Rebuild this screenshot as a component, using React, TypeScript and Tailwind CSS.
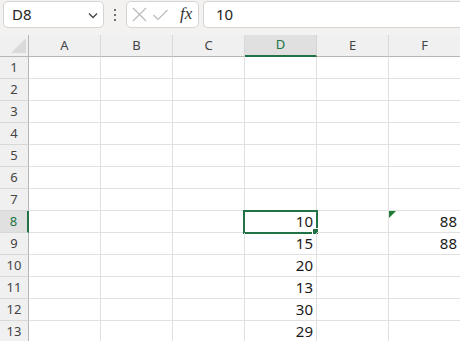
import React from "react";

const COLS = ["A", "B", "C", "D", "E", "F"];
const ROWS = Array.from({ length: 13 }, (_, i) => i + 1);
const DATA: Record<string, string> = {
  D8: "10",
  D9: "15",
  D10: "20",
  D11: "13",
  D12: "30",
  D13: "29",
  F8: "88",
  F9: "88",
};

export default function App() {
  return (
    <div
      className="w-[460px] h-[341px] overflow-hidden bg-white relative"
      style={{ fontFamily: '"Segoe UI", "Noto Sans", "Open Sans", sans-serif' }}
    >
      {/* Formula bar */}
      <div className="h-[35px] bg-[#f3f2f1] flex items-start pt-[1px] pl-[3px]">
        <div className="w-[101px] h-[27px] shrink-0 bg-white border border-[#d6d4d2] rounded-[5px] flex items-center justify-between pl-[8px] pr-[4px]">
          <span className="text-[15px] text-[#242424] leading-none">D8</span>
          <svg width="12" height="12" viewBox="0 0 12 12">
            <path d="M2 4.5 L6 8.5 L10 4.5" fill="none" stroke="#444" strokeWidth="1.3" />
          </svg>
        </div>
        <div className="w-[22px] h-[27px] shrink-0 flex flex-col items-center justify-center gap-[3px]">
          <div className="w-[2px] h-[2px] bg-[#444] rounded-full" />
          <div className="w-[2px] h-[2px] bg-[#444] rounded-full" />
          <div className="w-[2px] h-[2px] bg-[#444] rounded-full" />
        </div>
        <div className="w-[73px] h-[27px] shrink-0 bg-white border border-[#d6d4d2] rounded-[5px] flex items-center pl-[5px]">
          <svg className="shrink-0" width="15" height="15" viewBox="0 0 15 15">
            <path d="M1 1 L14 14 M14 1 L1 14" stroke="#b9b9b9" strokeWidth="1.1" fill="none" />
          </svg>
          <svg className="shrink-0 ml-[6px]" width="15" height="15" viewBox="0 0 15 15">
            <path d="M0.5 8 L5 12.5 L14.5 3" stroke="#b9b9b9" strokeWidth="1.1" fill="none" />
          </svg>
          <span
            className="shrink-0 text-[17px] italic text-[#333] leading-none ml-[12px] mb-[2px]"
            style={{ fontFamily: '"Liberation Serif", "DejaVu Serif", serif' }}
          >
            fx
          </span>
        </div>
        <div className="ml-[4px] flex-1 h-[27px] bg-white border border-[#d6d4d2] rounded-l-[5px] border-r-0 flex items-center pl-[12px]">
          <span className="text-[15px] text-[#242424] leading-none">10</span>
        </div>
      </div>

      {/* Grid */}
      <div className="grid grid-cols-[29px_repeat(6,72px)] auto-rows-[22px]">
        <div className="bg-[#f0f0f0] border-r border-b border-[#b6b6b6] relative">
          <svg className="absolute left-[11px] top-[3px]" width="15" height="15" viewBox="0 0 15 15">
            <path d="M15 0 L15 15 L0 15 Z" fill="#dadada" />
          </svg>
        </div>
        {COLS.map((c) => (
          <div
            key={c}
            className={
              c === "D"
                ? "bg-[#e0e0e0] border-r border-[#d4d4d4] border-b-[2px] border-b-[#217346] flex items-center justify-center text-[13px] text-[#217346]"
                : "bg-[#f0f0f0] border-r border-[#d8d8d8] border-b border-b-[#b6b6b6] flex items-center justify-center text-[13px] text-[#444]"
            }
          >
            {c}
          </div>
        ))}

        {ROWS.map((r) => (
          <React.Fragment key={r}>
            <div
              className={
                r === 8
                  ? "bg-[#e0e0e0] border-r-[2px] border-r-[#217346] border-b border-b-[#d8d8d8] flex items-center justify-center text-[13px] text-[#217346]"
                  : "bg-[#f0f0f0] border-r border-r-[#b6b6b6] border-b border-b-[#d8d8d8] flex items-center justify-center text-[13px] text-[#444]"
              }
            >
              {r}
            </div>
            {COLS.map((c) => {
              const key = `${c}${r}`;
              const v = DATA[key];
              const sel = key === "D8";
              return (
                <div
                  key={key}
                  className="relative border-r border-b border-[#e1e1e1] flex items-center justify-end pr-[3px] text-[15px] text-[#1a1a1a]"
                >
                  {v}
                  {sel && (
                    <>
                      <div className="absolute left-[-2px] right-[-2px] top-[-1px] bottom-[-2px] border-2 border-[#217346] pointer-events-none" />
                      <div className="absolute right-[-3px] bottom-[-3px] w-[7px] h-[7px] bg-[#217346] border border-white" />
                    </>
                  )}
                  {key === "F8" && (
                    <svg className="absolute left-0 top-0" width="7" height="7" viewBox="0 0 7 7">
                      <path d="M0 0 L7 0 L0 7 Z" fill="#1e7b34" />
                    </svg>
                  )}
                </div>
              );
            })}
          </React.Fragment>
        ))}
      </div>
    </div>
  );
}
